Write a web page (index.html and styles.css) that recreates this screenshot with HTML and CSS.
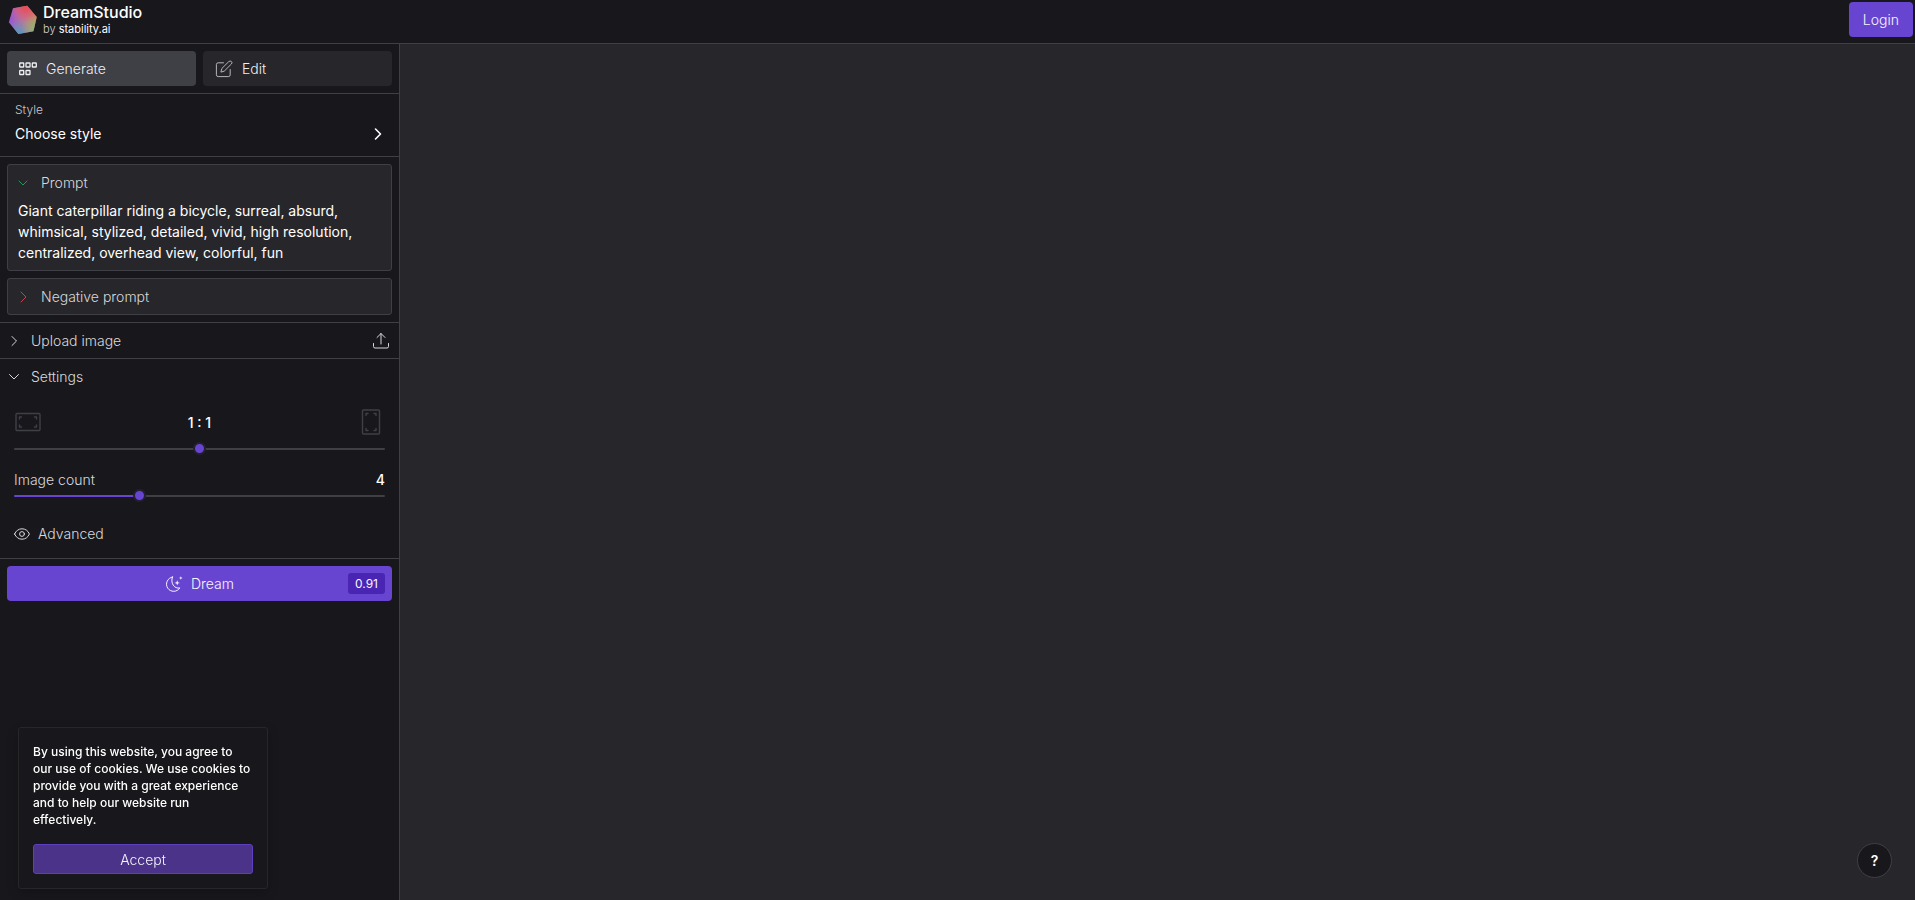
FILE: index.html
```html
<!DOCTYPE html>
<html lang="en">
<head>
<meta charset="utf-8">
<title>DreamStudio</title>
<meta name="viewport" content="width=device-width, initial-scale=1">
<link rel="stylesheet" href="styles.css">
</head>
<body>
<header class="topbar">
  <a class="brand" href="#">
    <svg class="brand-logo" viewBox="0 0 30 30" aria-hidden="true">
      <defs>
        <linearGradient id="lg-base" x1="0" y1="0.6" x2="1" y2="0.4"><stop offset="0" stop-color="#9450d8"/><stop offset="0.5" stop-color="#b9789a"/><stop offset="1" stop-color="#d08a5c"/></linearGradient>
        <radialGradient id="lg-red" cx="0.6" cy="0" r="0.6"><stop offset="0" stop-color="#ee4850"/><stop offset="0.35" stop-color="#e64c60" stop-opacity="0.75"/><stop offset="1" stop-color="#e0508a" stop-opacity="0"/></radialGradient>
        <radialGradient id="lg-blue" cx="0.35" cy="1" r="0.55"><stop offset="0" stop-color="#4a9cc4"/><stop offset="0.35" stop-color="#6598b8" stop-opacity="0.75"/><stop offset="1" stop-color="#7f90b0" stop-opacity="0"/></radialGradient>
        <radialGradient id="lg-green" cx="0.95" cy="0.8" r="0.5"><stop offset="0" stop-color="#7fb97c"/><stop offset="1" stop-color="#a8a870" stop-opacity="0"/></radialGradient>
      </defs>
      <path d="M5 3.2 19.2.8 28.8 12 25.4 26.2 10.4 29 .8 17.2Z" fill="url(#lg-base)"/>
      <path d="M5 3.2 19.2.8 28.8 12 25.4 26.2 10.4 29 .8 17.2Z" fill="url(#lg-red)"/>
      <path d="M5 3.2 19.2.8 28.8 12 25.4 26.2 10.4 29 .8 17.2Z" fill="url(#lg-blue)"/>
      <path d="M5 3.2 19.2.8 28.8 12 25.4 26.2 10.4 29 .8 17.2Z" fill="url(#lg-green)"/>
    </svg>
    <span class="brand-text">
      <span class="brand-name">DreamStudio</span>
      <span class="brand-by">by <span class="brand-owner">stability.ai</span></span>
    </span>
  </a>
  <button class="button login" type="button">Login</button>
</header>

<div class="workspace">
  <aside class="sidebar">
    <nav class="tabs">
      <button class="tab tab-active" type="button">
        <svg class="icon" viewBox="0 0 18 18" aria-hidden="true"><g stroke-width="1.3"><rect x=".7" y="3" width="4" height="4" rx=".6"/><rect x="7" y="3" width="4" height="4" rx=".6"/><rect x="13.300" y="3" width="4" height="4" rx=".6"/><rect x=".7" y="10.500" width="4" height="4" rx=".6"/><rect x="7" y="10.500" width="4" height="4" rx=".6"/></g></svg>
        Generate
      </button>
      <button class="tab" type="button">
        <svg class="icon icon-dim" viewBox="0 0 18 18" aria-hidden="true"><path d="M8.5 2.8H3.2A1.8 1.8 0 0 0 1.4 4.6V14.800A1.8 1.8 0 0 0 3.2 16.600H13.400A1.8 1.8 0 0 0 15.200 14.800V9.500M13.900 1.500A1.500 1.500 0 0 1 16.400 4L9.200 11.200 5.900 12.100 6.800 8.800Z"/></svg>
        Edit
      </button>
    </nav>

    <button class="style-picker" type="button">
      <span class="style-text"><span class="style-label">Style</span><span class="style-value">Choose style</span></span>
      <svg class="chevron" viewBox="0 0 14 14" aria-hidden="true"><path d="M4.5 2 9.5 7 4.5 12" stroke-width="1.6"/></svg>
    </button>

    <section class="prompts">
      <div class="prompt-box">
        <button class="prompt-head" type="button" aria-expanded="true">
          <svg class="chevron chevron-green" viewBox="0 0 14 14" aria-hidden="true"><path d="M3 5 7 9 11 5"/></svg>
          <span id="prompt-label">Prompt</span>
        </button>
        <textarea class="prompt-input" rows="3" spellcheck="false" aria-labelledby="prompt-label">Giant caterpillar riding a bicycle, surreal, absurd, whimsical, stylized, detailed, vivid, high resolution, centralized, overhead view, colorful, fun</textarea>
      </div>
      <div class="prompt-box">
        <button class="prompt-head" type="button" aria-expanded="false">
          <svg class="chevron chevron-red" viewBox="0 0 14 14" aria-hidden="true"><path d="M5 2 10 7 5 12"/></svg>
          <span>Negative prompt</span>
        </button>
      </div>
    </section>

    <div class="fold upload">
      <button class="fold-head" type="button" aria-expanded="false">
        <svg class="chevron" viewBox="0 0 14 14" aria-hidden="true"><path d="M5 2.5 9.5 7 5 11.5"/></svg>
        Upload image
      </button>
      <button class="icon-button" type="button" aria-label="Upload">
        <svg class="icon" viewBox="0 0 18 18" aria-hidden="true"><path d="M1.5 11.5V14.5A1.5 1.5 0 0 0 3 16H15A1.5 1.5 0 0 0 16.5 14.5V11.5M9 12V1.5M5 5.500 9 1.500 13 5.500"/></svg>
      </button>
    </div>

    <section class="settings">
      <button class="fold-head" type="button" aria-expanded="true">
        <svg class="chevron" viewBox="0 0 14 14" aria-hidden="true"><path d="M2.5 4.5 7 9 11.5 4.5"/></svg>
        Settings
      </button>
      <div class="settings-body">
        <div class="ratio-row">
          <svg class="ratio-icon" viewBox="0 0 28 28" aria-hidden="true"><rect x="2" y="5.5" width="24" height="17" rx="1"/><path d="M5.500 11V9H7.500M20.500 9H22.500V11M22.500 17V19H20.500M7.500 19H5.500V17"/></svg>
          <label class="ratio-value" for="ratio">1 : 1</label>
          <svg class="ratio-icon" viewBox="0 0 28 28" aria-hidden="true"><rect x="5.5" y="2" width="17" height="24" rx="1"/><path d="M9 7.500V5.500H11M17 5.500H19V7.500M19 20.500V22.500H17M11 22.500H9V20.500"/></svg>
        </div>
        <input class="slider" id="ratio" type="range" min="-10" max="10" value="0" style="--fill:0%">
        <div class="count-row">
          <label for="count">Image count</label>
          <output class="count-value" for="count">4</output>
        </div>
        <input class="slider" id="count" type="range" min="1" max="10" value="4" style="--fill:33%">
        <button class="advanced" type="button">
          <svg class="icon-eye" viewBox="0 0 16 16" aria-hidden="true"><path d="M.6 8C2 4.600 4.700 2.800 8 2.800S14 4.600 15.400 8C14 11.400 11.300 13.200 8 13.200S2 11.400.6 8Z"/><circle cx="8" cy="8" r="2.400"/></svg>
          Advanced
        </button>
      </div>
    </section>

    <div class="actions">
      <button class="button dream" type="button">
        <span class="dream-label">
          <svg class="icon" viewBox="0 0 18 18" aria-hidden="true"><path d="M7.500 2A7.200 7.200 0 1 0 14.800 12.900C9.500 14.200 5 8 7.500 2Z"/><path class="solid" d="M12.200 5.200 12.900 7.200 14.900 7.900 12.900 8.600 12.200 10.600 11.500 8.600 9.500 7.900 11.500 7.200ZM15.800 1.200 16.300 2.600 17.600 3 16.300 3.500 15.800 4.800 15.300 3.500 14 3 15.300 2.600Z"/></svg>
          Dream
        </span>
        <span class="price">0.91</span>
      </button>
    </div>
  </aside>
  <main class="canvas"></main>
</div>

<div class="cookie" role="dialog" aria-label="Cookies">
  <p class="cookie-text">By using this website, you agree to our use of cookies. We use cookies to provide you with a great experience and to help our website run effectively.</p>
  <button class="cookie-accept" type="button">Accept</button>
</div>
<button class="help" type="button" aria-label="Help">?</button>
</body>
</html>
```

FILE: styles.css
```css
:root {
  --bg: #18181c;
  --panel: #27272b;
  --line: #3f3f46;
  --text: #fff;
  --muted: #d8d8dc;
  --brand: #6845d1;
}

*,
*::before,
*::after {
  box-sizing: border-box;
}

body {
  margin: 0;
  min-height: 100vh;
  display: flex;
  flex-direction: column;
  background: var(--bg);
  color: var(--muted);
  font: 300 14px/21px Inter, "Liberation Sans", sans-serif;
}

button,
textarea {
  margin: 0;
  padding: 0;
  border: 0;
  background: none;
  color: inherit;
  font: inherit;
  text-align: left;
}

button {
  cursor: pointer;
}

svg {
  flex: none;
  fill: none;
  stroke: currentColor;
  stroke-width: 1;
  stroke-linecap: round;
  stroke-linejoin: round;
}

.solid {
  fill: currentColor;
  stroke: none;
}

.icon {
  width: 18px;
  height: 18px;
}

.icon-dim {
  color: #b4b4bb;
}

.chevron {
  width: 14px;
  height: 14px;
}

.chevron-green {
  color: #1f9a54;
}

.chevron-red {
  color: #c8404a;
}

.button {
  height: 35px;
  border-radius: 4px;
  background: var(--brand);
  color: #f8f5ff;
}

.topbar {
  display: flex;
  align-items: center;
  justify-content: space-between;
  height: 44px;
  padding: 0 2px 4px 8px;
  border-bottom: 1px solid var(--line);
}

.brand {
  display: flex;
  align-items: center;
  gap: 5px;
  color: var(--text);
  text-decoration: none;
}

.brand-logo {
  width: 30px;
  height: 30px;
  stroke: none;
}

.brand-text {
  display: flex;
  flex-direction: column;
}

.brand-name {
  font-size: 16px;
  font-weight: 500;
  line-height: 18px;
}

.brand-by {
  color: #d4d4d8;
  font-size: 11px;
  line-height: 16px;
}

.brand-owner {
  color: var(--text);
  font-weight: 400;
}

.login {
  padding: 0 14px;
}

.workspace {
  flex: 1;
  display: flex;
}

.sidebar {
  flex: none;
  width: 400px;
  border-right: 1px solid var(--line);
}

.canvas {
  flex: 1;
  background: var(--panel);
}

.tabs {
  display: grid;
  grid-template-columns: 1fr 1fr;
  gap: 7px;
  padding: 7px;
  border-bottom: 1px solid var(--line);
}

.tab {
  display: flex;
  align-items: center;
  gap: 9px;
  height: 35px;
  padding: 0 12px;
  border-radius: 4px;
  background: var(--panel);
  color: #f0f0f2;
}

.tab-active {
  background: var(--line);
}

.style-picker {
  display: flex;
  align-items: center;
  justify-content: space-between;
  width: 100%;
  padding: 5px 14px 10px 15px;
  border-bottom: 1px solid var(--line);
  color: var(--text);
}

.style-picker .chevron {
  align-self: flex-end;
  margin-bottom: 5px;
}

.style-text {
  display: flex;
  flex-direction: column;
  gap: 2px;
}

.style-label {
  color: #c8c8ce;
  font-size: 12px;
}

.style-value {
  font-weight: 400;
  line-height: 24px;
}

.prompts {
  display: flex;
  flex-direction: column;
  gap: 7px;
  padding: 7px;
  border-bottom: 1px solid var(--line);
}

.prompt-box {
  border: 1px solid var(--line);
  border-radius: 3px;
  background: var(--panel);
}

.prompt-head {
  display: flex;
  align-items: center;
  gap: 11px;
  width: 100%;
  height: 35px;
  padding: 0 8px;
}

.prompt-input {
  display: block;
  width: 100%;
  margin-bottom: 7px;
  padding: 0 10px;
  outline: 0;
  overflow: hidden;
  resize: none;
  color: var(--text);
  font-weight: 400;
}

.fold-head {
  display: flex;
  flex: 1;
  align-items: center;
  gap: 10px;
  height: 35px;
  padding-left: 7px;
}

.upload {
  display: flex;
  align-items: center;
  padding-right: 9px;
  border-bottom: 1px solid var(--line);
}

.icon-button {
  display: flex;
}

.settings {
  border-bottom: 1px solid var(--line);
}

.settings-body {
  display: flex;
  flex-direction: column;
  padding: 14px 14px 7px;
}

.ratio-row {
  display: flex;
  align-items: center;
  justify-content: space-between;
  height: 28px;
  margin-bottom: 6px;
}

.ratio-icon {
  width: 28px;
  height: 28px;
  color: var(--line);
  stroke-width: 1.4;
}

.ratio-value,
.count-value {
  color: var(--text);
  font-weight: 500;
}

.count-row {
  display: flex;
  justify-content: space-between;
  margin-top: 14px;
  line-height: 19px;
}

.slider {
  appearance: none;
  width: 100%;
  height: 14px;
  margin: 0;
  background: none;
}

.slider::-webkit-slider-runnable-track {
  height: 2px;
  border-radius: 1px;
  background: linear-gradient(to right, var(--brand) var(--fill), var(--line) var(--fill));
}

.slider::-webkit-slider-thumb {
  appearance: none;
  width: 13px;
  height: 13px;
  margin-top: -6px;
  border: 2px solid #242033;
  border-radius: 50%;
  background: var(--brand);
}

.advanced {
  display: flex;
  align-items: center;
  align-self: flex-start;
  gap: 8px;
  height: 35px;
  margin-top: 13px;
}

.icon-eye {
  width: 16px;
  height: 16px;
}

.actions {
  padding: 7px;
}

.dream {
  display: grid;
  grid-template-columns: 1fr auto 1fr;
  align-items: center;
  width: 100%;
  padding: 0 7px;
}

.dream-label {
  display: flex;
  grid-column: 2;
  align-items: center;
  gap: 8px;
}

.price {
  justify-self: end;
  padding: 0 7px;
  border-radius: 3px;
  background: #4a25b4;
  font-size: 12px;
  font-weight: 400;
}

.cookie {
  position: fixed;
  bottom: 11px;
  left: 18px;
  width: 250px;
  padding: 15px 14px 14px;
  border: 1px solid var(--panel);
  border-radius: 3px;
  background: var(--bg);
  box-shadow: 0 4px 12px #0003;
}

.cookie-text {
  margin: 0 0 16px;
  color: var(--text);
  font-size: 12px;
  font-weight: 500;
  line-height: 17px;
}

.cookie-accept {
  display: block;
  width: 100%;
  height: 30px;
  border: 1px solid #5d3fc0;
  border-radius: 3px;
  background: #4a3389;
  color: #f5f3ff;
  text-align: center;
}

.help {
  position: fixed;
  right: 23px;
  bottom: 22px;
  width: 35px;
  height: 35px;
  border: 1px solid var(--line);
  border-radius: 50%;
  background: var(--bg);
  color: #fff;
  font-weight: 600;
  text-align: center;
}
```
